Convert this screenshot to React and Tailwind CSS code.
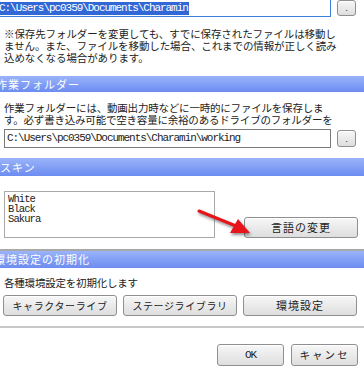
import React from "react";

const jp = { fontFamily: '"Noto Sans CJK JP", "Noto Sans", sans-serif' };
const mono = { fontFamily: '"Liberation Mono", "Noto Sans CJK JP", monospace' };

const Btn = ({ className = "", children }) => (
  <button
    className={
      "flex items-center justify-center whitespace-nowrap rounded-[3px] border border-[#8f8f8f] bg-gradient-to-b from-[#f7f7f7] to-[#dedede] text-[#222] shadow-[inset_0_1px_0_#fff] " +
      className
    }
    style={jp}
  >
    {children}
  </button>
);

const Header = ({ children, indent = "ml-0", className = "" }) => (
  <div
    className={
      "flex items-center bg-gradient-to-b from-[#9ab3f9] to-[#6c8cf1] text-[11px] text-white overflow-hidden " +
      className
    }
    style={jp}
  >
    <span className={"whitespace-nowrap tracking-[1px] " + indent}>{children}</span>
  </div>
);

export default function App() {
  return (
    <div className="relative w-[364px] h-[370px] overflow-hidden bg-white text-[#111]">
      {/* 保存先 */}
      <div className="flex items-start h-[17px]">
        <div className="w-[331px] h-[17px] border border-[#3d7fd8] border-l-0 border-t-0 flex items-center overflow-hidden">
          <span
            className="bg-[#3168d5] text-white text-[11px] tracking-[-1.05px] leading-[13px] -ml-[1px] pr-[1px] whitespace-nowrap"
            style={mono}
          >
            C:\Users\pc0359\Documents\Charamin
          </span>
        </div>
        <Btn className="ml-[6px] w-[19px] h-[16px] text-[8px]">.</Btn>
      </div>

      <div className="mt-[11px] pl-[4px] text-[10.5px] leading-[12px] tracking-[-0.1px] text-[#222]" style={jp}>
        <div className="whitespace-nowrap">※保存先フォルダーを変更しても、すでに保存されたファイルは移動し</div>
        <div className="whitespace-nowrap">ません。また、ファイルを移動した場合、これまでの情報が正しく読み</div>
        <div className="whitespace-nowrap">込めなくなる場合があります。</div>
      </div>

      {/* 作業フォルダー */}
      <Header indent="-ml-[4px]" className="mt-[12px] h-[16px]">作業フォルダー</Header>

      <div className="mt-[10px] pl-[4px] text-[10.5px] leading-[12px] tracking-[-0.2px] text-[#222]" style={jp}>
        <div className="whitespace-nowrap">作業フォルダーには、動画出力時などに一時的にファイルを保存しま</div>
        <div className="whitespace-nowrap">す。必ず書き込み可能で空き容量に余裕のあるドライブのフォルダーを</div>
      </div>

      <div className="mt-[3px] flex items-center pl-[4px]">
        <div className="w-[327px] h-[19px] border border-[#7a7a7a] flex items-center overflow-hidden">
          <span className="pl-[2px] text-[11px] tracking-[-1.05px] whitespace-nowrap text-[#222]" style={mono}>
            C:\Users\pc0359\Documents\Charamin\working
          </span>
        </div>
        <Btn className="ml-[6px] w-[19px] h-[17px] text-[8px]">.</Btn>
      </div>

      {/* スキン */}
      <Header className="mt-[10px] h-[18px]">スキン</Header>

      <div className="mt-[15px] flex items-end pl-[4px]">
        <div className="w-[211px] h-[47px] border border-[#a9a9a9] pl-[3px] pt-[2px] text-[10.5px] leading-[10px] tracking-[-0.9px] text-[#222]" style={mono}>
          <div>White</div>
          <div>Black</div>
          <div>Sakura</div>
        </div>
        <Btn className="ml-[29px] w-[114px] h-[21px] text-[11px] tracking-[1px]">言語の変更</Btn>
      </div>

      {/* 環境設定の初期化 */}
      <Header indent="-ml-[6px]" className="mt-[11px] h-[19px] border-t-2 border-[#a8a8a8]">
        環境設定の初期化
      </Header>

      <div className="mt-[9px] pl-[4px] text-[10.5px] leading-[12px] tracking-[-0.2px] text-[#222]" style={jp}>
        各種環境設定を初期化します
      </div>

      <div className="mt-[6px] flex gap-[6px] pl-[3px]">
        <Btn className="w-[114px] h-[21px] text-[10px] tracking-[0.6px]">キャラクターライブ</Btn>
        <Btn className="w-[114px] h-[21px] text-[10px] tracking-[0.6px]">ステージライブラリ</Btn>
        <Btn className="w-[114px] h-[21px] text-[11px] tracking-[1px]">環境設定</Btn>
      </div>

      <div className="mt-[10px] h-[2px] bg-[#c8c8c8]" />

      <div className="mt-[16px] flex justify-end gap-[7px] pr-[6px]">
        <Btn className="w-[67px] h-[22px]">
          <span style={mono} className="text-[11px] tracking-[-1px]">OK</span>
        </Btn>
        <Btn className="w-[67px] h-[22px] text-[10.5px] tracking-[2px]">キャンセ</Btn>
      </div>

      {/* red arrow */}
      <svg
        className="absolute left-[192px] top-[206px] pointer-events-none"
        width="64"
        height="34"
        viewBox="0 0 64 34"
        style={{ filter: "drop-shadow(1px 2px 1.5px rgba(0,0,0,0.45))" }}
      >
        <line x1="7" y1="5" x2="44" y2="20" stroke="#e8141b" strokeWidth="3" strokeLinecap="round" />
        <polygon points="58,27 38,27 46,13" fill="#e8141b" />
      </svg>
    </div>
  );
}
